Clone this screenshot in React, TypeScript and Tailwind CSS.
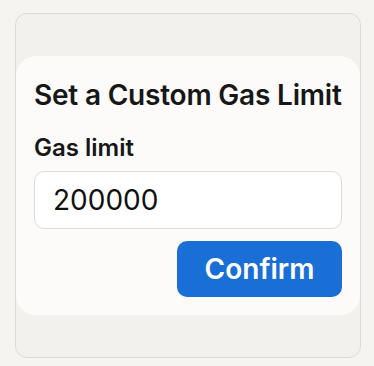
export default function App() {
  return (
    <div
      className="min-h-screen bg-[#f6f4f1] pl-[15px] pr-[13px] pt-[13px] pb-[8px]"
      style={{ fontFamily: 'Inter, "Noto Sans", sans-serif' }}
    >
      <div className="rounded-[12px] border border-[#dedbd6] bg-[#f3f1ee] pt-[42px] pb-[42px]">
        <div className="rounded-[20px] bg-[#fcfbf9] px-[18px] pt-[22px] pb-[18px]">
          <h1 className="text-[28px] leading-[34px] font-semibold text-[#171717] tracking-[-0.2px]">
            Set a Custom Gas Limit
          </h1>
          <label className="mt-[21px] block text-[24px] leading-[30px] font-semibold text-[#171717]">
            Gas limit
          </label>
          <input
            defaultValue="200000"
            className="mt-[8px] block h-[58px] w-full rounded-[10px] border border-[#dcdad6] bg-white px-[18px] text-[28px] text-[#111] outline-none"
          />
          <div className="mt-[12px] flex justify-end">
            <button className="h-[56px] w-[165px] rounded-[10px] bg-[#1a6fd6] text-[28px] font-semibold text-white">
              Confirm
            </button>
          </div>
        </div>
      </div>
    </div>
  );
}
